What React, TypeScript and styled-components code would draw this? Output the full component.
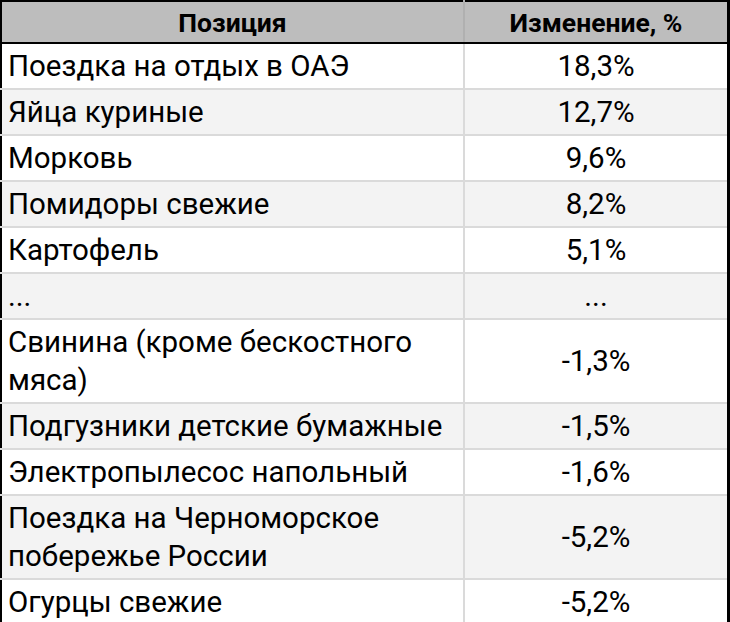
import * as React from 'react'
import styled, { createGlobalStyle } from 'styled-components'

const GlobalStyle = createGlobalStyle`
  html, body {
    margin: 0;
    padding: 0;
    background: #fff;
  }
`

const Table = styled.table`
  width: 730px;
  border-collapse: collapse;
  border-top: 2px solid #000;
  border-left: 2px solid #000;
  border-right: 3px solid #000;
  border-bottom: 3px solid #000;
  font-family: Roboto, 'Liberation Sans', sans-serif;
  color: #000;
`
const NameCol = styled.col`
  width: 463px;
`
const HeadCell = styled.th`
  height: 40px;
  padding: 0 6px;
  background: #bdbdbd;
  border-bottom: 2px solid #000;
  font-size: 26.5px;
  font-weight: 700;
  text-align: center;
  vertical-align: middle;

  & + & {
    border-left: 2px solid #b0b0b0;
  }
`
const Row = styled.tr<{ $shaded: boolean }>`
  background: ${p => (p.$shaded ? '#f3f3f3' : '#fff')};

  & + & {
    border-top: 2px solid #dadada;
  }
`
const Cell = styled.td<{ $center?: boolean }>`
  padding: 3px 6px;
  font-size: 29.5px;
  line-height: 38px;
  text-align: ${p => (p.$center ? 'center' : 'left')};
  vertical-align: middle;

  & + & {
    border-left: 2px solid #dadada;
  }
`

const rows: [string, string][] = [
  ['Поездка на отдых в ОАЭ', '18,3%'],
  ['Яйца куриные', '12,7%'],
  ['Морковь', '9,6%'],
  ['Помидоры свежие', '8,2%'],
  ['Картофель', '5,1%'],
  ['...', '...'],
  ['Свинина (кроме бескостного мяса)', '-1,3%'],
  ['Подгузники детские бумажные', '-1,5%'],
  ['Электропылесос напольный', '-1,6%'],
  ['Поездка на Черноморское побережье России', '-5,2%'],
  ['Огурцы свежие', '-5,2%'],
]

export default function App() {
  return (
    <>
      <GlobalStyle />
      <Table>
        <colgroup>
          <NameCol />
          <col />
        </colgroup>
        <thead>
          <tr>
            <HeadCell>Позиция</HeadCell>
            <HeadCell>Изменение, %</HeadCell>
          </tr>
        </thead>
        <tbody>
          {rows.map(([name, value], i) => (
            <Row key={i} $shaded={i % 2 === 1}>
              <Cell>{name}</Cell>
              <Cell $center>{value}</Cell>
            </Row>
          ))}
        </tbody>
      </Table>
    </>
  )
}
